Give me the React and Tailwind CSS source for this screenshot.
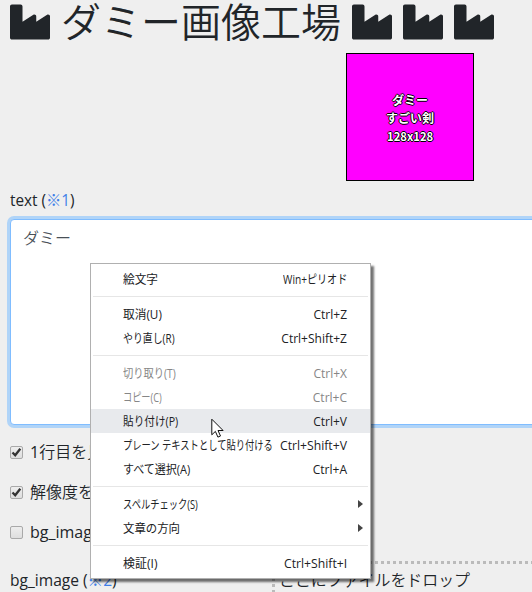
import React from "react";
import { FaIndustry } from "react-icons/fa";

const GROUPS = [
  [{ label: "絵文字", keys: "Win+ピリオド", w: 35, kw: 64 }],
  [
    { label: "取消(U)", keys: "Ctrl+Z", w: 39, kw: 34 },
    { label: "やり直し(R)", keys: "Ctrl+Shift+Z", w: 52, kw: 66 },
  ],
  [
    { label: "切り取り(T)", keys: "Ctrl+X", w: 53, kw: 34, disabled: true },
    { label: "コピー(C)", keys: "Ctrl+C", w: 39, kw: 34, disabled: true },
    { label: "貼り付け(P)", keys: "Ctrl+V", w: 55, kw: 34, active: true },
    { label: "プレーン テキストとして貼り付ける", keys: "Ctrl+Shift+V", w: 150, kw: 67 },
    { label: "すべて選択(A)", keys: "Ctrl+A", w: 67, kw: 34 },
  ],
  [
    { label: "スペルチェック(S)", w: 75, sub: true },
    { label: "文章の方向", w: 57, sub: true },
  ],
  [{ label: "検証(I)", keys: "Ctrl+Shift+I", w: 34, kw: 63 }],
];

// A single line of text condensed or widened to a given width.
function FitText({ width, right, children }) {
  const ref = React.useRef(null);
  const [scale, setScale] = React.useState(1);
  React.useLayoutEffect(() => {
    const fit = () => ref.current && setScale(width / ref.current.offsetWidth);
    fit();
    document.fonts.ready.then(fit);
  }, [width]);
  return (
    <span className={`flex whitespace-nowrap ${right ? "justify-end" : ""}`} style={{ width }}>
      <span
        ref={ref}
        className={`block shrink-0 ${right ? "origin-right" : "origin-left"}`}
        style={{ transform: `scaleX(${scale})` }}
      >
        {children}
      </span>
    </span>
  );
}

function MenuItem({ item }) {
  return (
    <div
      className={`flex h-6 items-center justify-between pl-8 pt-0.5 text-[12px] leading-[22px] ${
        item.sub ? "pr-[7px]" : "pr-[23px]"
      } ${item.active ? "bg-[#e8eaed]" : ""} ${item.disabled ? "text-[#868686]" : "text-[#202124]"}`}
    >
      <FitText width={item.w}>{item.label}</FitText>
      {item.keys && (
        <FitText width={item.kw} right>
          {item.keys}
        </FitText>
      )}
      {item.sub && (
        <svg className="mb-0.5 h-2 w-[5px] fill-[#444]" viewBox="0 0 5 8">
          <path d="M0 0 5 4 0 8z" />
        </svg>
      )}
    </div>
  );
}

function ContextMenu() {
  return (
    <div className="absolute left-[90px] top-[263px] h-[316px] w-[281px] border border-[#b0b0b0] bg-white py-[3px] font-['Open_Sans','Noto_Sans_CJK_JP',sans-serif] shadow-[3px_3px_2px_rgba(0,0,0,0.55)]">
      {GROUPS.map((group, i) => (
        <div key={i}>
          {i > 0 && <div className="mx-0.5 my-[5px] h-px bg-[#e6e6e6]" />}
          {group.map((item) => (
            <MenuItem key={item.label} item={item} />
          ))}
        </div>
      ))}
    </div>
  );
}

function Checkbox({ checked, children }) {
  return (
    <label className="flex h-10 items-center">
      <span className="flex h-[13px] w-[13px] items-center justify-center rounded-[2px] border border-[#a9a9a9] bg-gradient-to-b from-[#eeeeee] to-[#dedede]">
        {checked && (
          <svg className="h-[11px] w-[11px]" viewBox="0 0 11 11" fill="none" stroke="#333" strokeWidth="2.3">
            <path d="M1.5 5.5 4.2 8.2 9.3 1.8" />
          </svg>
        )}
      </span>
      <span className="ml-[7px] whitespace-nowrap">{children}</span>
    </label>
  );
}

export default function App() {
  return (
    <div className="relative h-[592px] w-[532px] overflow-hidden bg-[#efefef] font-['Open_Sans','Noto_Sans_CJK_JP',sans-serif] text-[16px] leading-6 text-[#212529]">
      <h1 className="flex h-[44px] items-center pl-[10px] text-[40px] leading-[40px]">
        <FaIndustry />
        <span className="-mt-1 ml-[11px] mr-[11px] w-[280px] whitespace-nowrap font-['Noto_Sans_CJK_JP',sans-serif] font-[350]">
          ダミー画像工場
        </span>
        <span className="flex gap-[11px]">
          <FaIndustry />
          <FaIndustry />
          <FaIndustry />
        </span>
      </h1>

      <div className="ml-[346px] mt-[9px] flex h-32 w-32 flex-col items-center justify-center border border-black bg-[#ff00ff] pt-px text-center font-['Noto_Sans_CJK_JP',sans-serif] text-[12px] font-bold leading-[18px] text-white [text-shadow:1px_0_0_#000,-1px_0_0_#000,0_1px_0_#000,0_-1px_0_#000]">
        <div>ダミー</div>
        <div>すごい剣</div>
        <FitText width={46}>128x128</FitText>
      </div>

      <div className="mt-[7px] flex h-6 pl-[10px]">
        <FitText width={65}>
          text (<span className="text-[#3f7fe8]">※1</span>)
        </FitText>
      </div>

      <div className="ml-[10px] mt-[7px] h-[206px] w-[540px] rounded-[4px] border border-[#80bdff] bg-white px-3 pt-[5px] font-['Noto_Sans_CJK_JP',sans-serif] font-[350] text-[#495057] shadow-[0_0_0_3px_#b0d4f8]">
        ダミー
      </div>

      <div className="mt-[7px] pl-[10px]">
        <Checkbox checked>
          1<span className="font-[350]">行目を見</span>
        </Checkbox>
        <Checkbox checked>
          <span className="font-[350]">解像度を</span>
        </Checkbox>
        <Checkbox>bg_image</Checkbox>
      </div>

      <div className="mt-[9px] flex">
        <div className="w-[272px] shrink-0 pl-[10px] pt-[7px]">
          <FitText width={107}>
            bg_image (<span className="text-[#3f7fe8]">※2</span>)
          </FitText>
        </div>
        <div className="h-20 w-[280px] shrink-0 border-[3px] border-dotted border-[#bbb] pl-1 pt-1 font-[350]">
          <FitText width={191}>ここにファイルをドロップ</FitText>
        </div>
      </div>

      <ContextMenu />

      <svg className="absolute left-[211px] top-[418px] h-[20px] w-[13px]" viewBox="0 0 13 20">
        <path
          d="M.8 1.2v15.6l3.6-3.4 2.5 5.7 2.6-1.1L7 12.5h5.1z"
          fill="#fff"
          stroke="#111"
        />
      </svg>
    </div>
  );
}
